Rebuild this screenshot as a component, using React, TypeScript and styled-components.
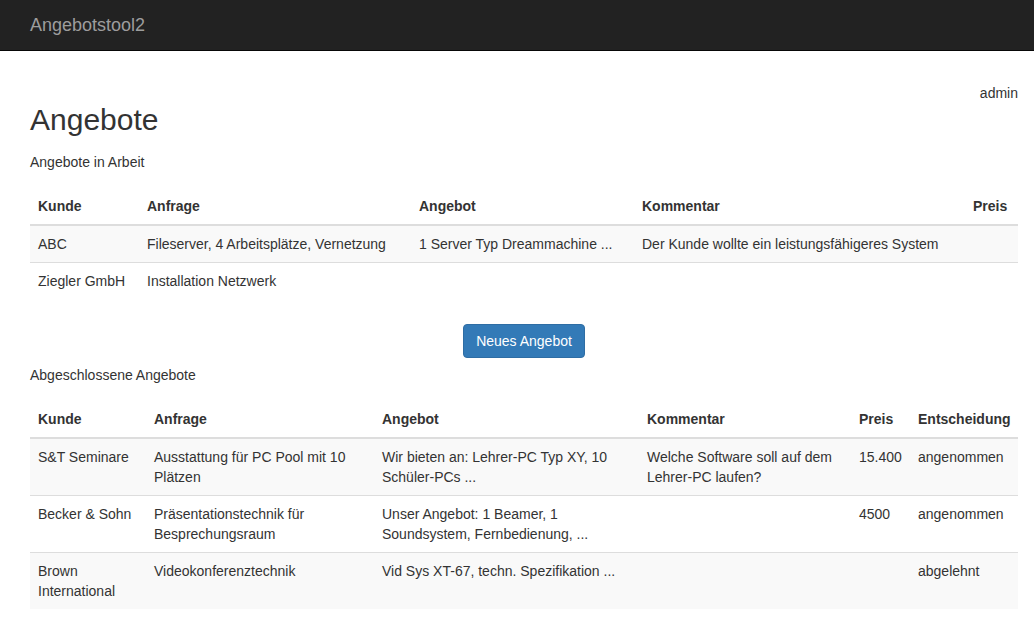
import React from 'react'
import styled, { createGlobalStyle } from 'styled-components'

const GlobalStyle = createGlobalStyle`
  html, body {
    margin: 0;
    padding: 0;
    background: #fff;
  }
  body {
    font-family: "Liberation Sans", Arial, Helvetica, sans-serif;
    font-size: 14px;
    line-height: 20px;
    color: #333;
  }
  * {
    box-sizing: border-box;
  }
`

const Navbar = styled.nav`
  height: 51px;
  background: #222;
  border-bottom: 1px solid #080808;
  display: flex;
  align-items: center;
  padding: 0 30px;
`

const Brand = styled.a`
  color: #9d9d9d;
  font-size: 18px;
  line-height: 20px;
  text-decoration: none;
`

const Main = styled.main`
  padding: 32px 16px 20px 30px;
`

const UserBar = styled.div`
  display: flex;
  justify-content: flex-end;
  height: 20px;
`

const Title = styled.h2`
  font-size: 30px;
  font-weight: 500;
  line-height: 33px;
  margin: 0 0 16px;
`

const SectionLabel = styled.p`
  margin: 0 0 16px;
`

const Table = styled.table`
  width: 100%;
  border-collapse: collapse;
  border-spacing: 0;
  table-layout: fixed;
`

const Th = styled.th<{ $w: number }>`
  width: ${({ $w }) => $w}px;
  text-align: left;
  font-weight: bold;
  padding: 8px;
  line-height: 20px;
  vertical-align: bottom;
  border-bottom: 2px solid #ddd;
`

const Tr = styled.tr`
  &:nth-child(odd) {
    background: #f9f9f9;
  }
`

const Td = styled.td`
  padding: 8px;
  line-height: 20px;
  vertical-align: top;
  border-top: 1px solid #ddd;
`

const Tbody = styled.tbody`
  & > tr:first-child > td {
    border-top: 0;
  }
`

const ButtonRow = styled.div`
  display: flex;
  justify-content: center;
  margin: 25px 0 7px;
`

const PrimaryButton = styled.button`
  font-family: inherit;
  font-size: 14px;
  line-height: 20px;
  padding: 6px 12px;
  color: #fff;
  background: #337ab7;
  border: 1px solid #2e6da4;
  border-radius: 4px;
  cursor: pointer;
`

type Col = { label: string; w: number }

const openCols: Col[] = [
  { label: 'Kunde', w: 109 },
  { label: 'Anfrage', w: 272 },
  { label: 'Angebot', w: 223 },
  { label: 'Kommentar', w: 331 },
  { label: 'Preis', w: 53 },
]

const openRows = [
  ['ABC', 'Fileserver, 4 Arbeitsplätze, Vernetzung', '1 Server Typ Dreammachine ...', 'Der Kunde wollte ein leistungsfähigeres System', ''],
  ['Ziegler GmbH', 'Installation Netzwerk', '', '', ''],
]

const doneCols: Col[] = [
  { label: 'Kunde', w: 116 },
  { label: 'Anfrage', w: 228 },
  { label: 'Angebot', w: 265 },
  { label: 'Kommentar', w: 212 },
  { label: 'Preis', w: 59 },
  { label: 'Entscheidung', w: 108 },
]

const doneRows = [
  ['S&T Seminare', 'Ausstattung für PC Pool mit 10 Plätzen', 'Wir bieten an: Lehrer-PC Typ XY, 10 Schüler-PCs ...', 'Welche Software soll auf dem Lehrer-PC laufen?', '15.400', 'angenommen'],
  ['Becker & Sohn', 'Präsentationstechnik für Besprechungsraum', 'Unser Angebot: 1 Beamer, 1 Soundsystem, Fernbedienung, ...', '', '4500', 'angenommen'],
  ['Brown International', 'Videokonferenztechnik', 'Vid Sys XT-67, techn. Spezifikation ...', '', '', 'abgelehnt'],
]

function OfferTable({ cols, rows }: { cols: Col[]; rows: string[][] }) {
  return (
    <Table>
      <thead>
        <tr>
          {cols.map((c) => (
            <Th key={c.label} $w={c.w}>{c.label}</Th>
          ))}
        </tr>
      </thead>
      <Tbody>
        {rows.map((r, i) => (
          <Tr key={i}>
            {r.map((cell, j) => (
              <Td key={j}>{cell}</Td>
            ))}
          </Tr>
        ))}
      </Tbody>
    </Table>
  )
}

export default function App() {
  return (
    <>
      <GlobalStyle />
      <Navbar>
        <Brand href="#">Angebotstool2</Brand>
      </Navbar>
      <Main>
        <UserBar>admin</UserBar>
        <Title>Angebote</Title>
        <SectionLabel>Angebote in Arbeit</SectionLabel>
        <OfferTable cols={openCols} rows={openRows} />
        <ButtonRow>
          <PrimaryButton>Neues Angebot</PrimaryButton>
        </ButtonRow>
        <SectionLabel>Abgeschlossene Angebote</SectionLabel>
        <OfferTable cols={doneCols} rows={doneRows} />
      </Main>
    </>
  )
}
